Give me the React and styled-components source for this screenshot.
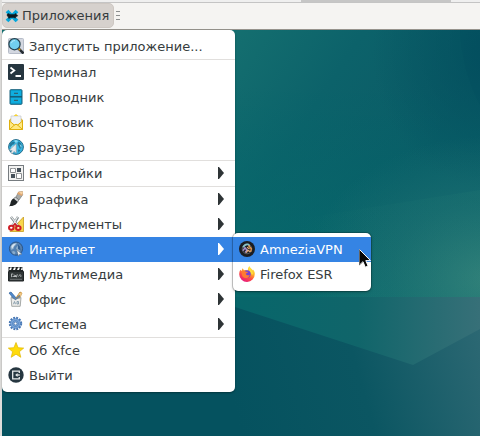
import React from "react";
import styled, { createGlobalStyle, css } from "styled-components";

const GlobalStyle = createGlobalStyle`
  * { box-sizing: border-box; }
  body { margin: 0; }
  body, button { font-family: "DejaVu Sans", sans-serif; font-size: 13px; line-height: 16px; color: #363c3e; }
`;

const Screen = styled.div`
  min-height: 100vh;
  display: flex;
  flex-direction: column;
  background: #f5f4f2;
  border-left: 2px solid #dedddb;
`;

const HostTabs = styled.div`
  display: flex;
  justify-content: flex-end;
  height: 3px;
  padding-right: 29px;
  background: #efefef;
  border-bottom: 1px solid #c4c4c4;
`;

const HostTab = styled.div`
  flex: 0 1 150px;
  background: #c6c6c6;
`;

const Panel = styled.header`
  display: flex;
  align-items: center;
  gap: 2px;
  height: 27px;
  padding-bottom: 1px;
  border-bottom: 1px solid #96938d;
`;

const AppsButton = styled.button`
  display: flex;
  align-items: center;
  gap: 3px;
  min-width: 112px;
  height: 25px;
  padding: 0 2px;
  border: 1px solid #cdc7c2;
  border-radius: 5px;
  background: #d6d1cd;
`;

const Grip = styled.span`
  width: 4px;
  height: 9px;
  background: repeating-linear-gradient(#8b8e8f 0 1px, transparent 1px 4px);
`;

const Desktop = styled.main`
  position: relative;
  flex: 1;
  background: #06545f;
`;

const Wallpaper = styled.svg`
  position: absolute;
  inset: 0;
  width: 100%;
  height: 100%;
`;

const menuSurface = css`
  margin: 0;
  padding: 4px 0;
  list-style: none;
  background: #fff;
  border-radius: 5px;
`;

const Menu = styled.ul`
  ${menuSurface}
  position: relative;
  width: 233px;
  box-shadow: 0 1px 2px rgba(0, 0, 0, 0.35);
`;

const Submenu = styled.ul`
  ${menuSurface}
  position: absolute;
  left: calc(100% - 2px);
  top: -4px;
  width: 138px;
  box-shadow: 0 0 0 1px rgba(0, 0, 0, 0.18), 0 1px 3px rgba(0, 0, 0, 0.3);
`;

const MenuRow = styled.li`
  position: relative;
`;

const MenuButton = styled.button`
  display: flex;
  align-items: center;
  gap: 5px;
  width: 100%;
  height: 25px;
  padding: 0 10px 1px 6px;
  border: 0;
  text-align: left;
  white-space: nowrap;
  background: ${(p) => (p.$active ? "#3584e4" : "transparent")};
  color: ${(p) => (p.$active ? "#fff" : "#363c3e")};
`;

const Label = styled.span`
  flex: 1;
  padding-top: 2px;
`;

const Divider = styled.li`
  height: 1px;
  background: #e1dfdd;
`;

const Glyph = styled.svg`
  display: block;
  flex: none;
  width: ${(p) => p.$size || 16}px;
  height: ${(p) => p.$size || 16}px;
`;

const ArrowGlyph = styled.svg`
  flex: none;
  width: 7px;
  height: 12px;
  fill: ${(p) => (p.$active ? "#fff" : "#2e3436")};
`;

const Pointer = styled.svg`
  position: absolute;
  z-index: 2;
  right: 0;
  top: 12px;
  width: 12px;
  height: 19px;
  overflow: visible;
  pointer-events: none;
`;

const icons = {
  search: (
    <>
      <rect x=".5" y=".5" width="15" height="15" rx="1" fill="#d3d7e0" stroke="#b6bcc8" />
      <path d="m10 10 4.7 4.7" stroke="#252c32" strokeWidth="2.6" strokeLinecap="round" />
      <path d="m10.3 10.3 1.8 1.8" stroke="#e8a313" strokeWidth="1.6" />
      <circle cx="6.5" cy="6.2" r="5.6" fill="#72cfee" stroke="#25414d" strokeWidth="1.2" />
      <path d="M3.3 5.2A3.4 3.4 0 0 1 7 2.5" fill="none" stroke="#b2eafa" />
    </>
  ),
  terminal: (
    <>
      <rect width="16" height="16" rx="1" fill="#263640" />
      <path d="m2.5 3.5 3.8 3-3.8 3" fill="none" stroke="#fff" strokeWidth="1.8" />
      <path d="M7.5 12h5.5" stroke="#fff" strokeWidth="2" />
    </>
  ),
  files: (
    <>
      <rect x="2" y=".7" width="12" height="14.6" rx=".8" fill="#0c9fce" stroke="#17607c" strokeWidth="1" />
      <path d="M3 1.8h10v5H3zM3 8.8h10v5H3z" fill="#0faee0" />
      <path d="M2 7.8h12" stroke="#174f66" strokeWidth="1.2" />
      <path d="M6 4.3h4M6 11.3h4" stroke="#36505c" strokeWidth="1" />
    </>
  ),
  mail: (
    <>
      <path d="M1.5 6 8 .8 14.5 6v9.5h-13z" fill="#eec21b" stroke="#d6ac18" />
      <path d="M3 2h10v7l-5 3-5-3z" fill="#f1f3f5" stroke="#c4c7ca" strokeWidth=".7" />
      <path d="M6.2 2 8 .3 9.8 2z" fill="#ffd923" />
      <path d="m1.5 6.5 4.8 4.2L8 9.5l1.7 1.2 4.8-4.2v9h-13z" fill="#ffe982" />
      <path d="M1.5 6v9.5h13V6M2 15l5-4.5h2L14 15M1.5 7l5 4.2M14.5 7l-5 4.2" fill="none" stroke="#dfb00f" />
    </>
  ),
  browser: (
    <>
      <circle cx="8" cy="8" r="7.4" fill="#35b4e2" stroke="#266b88" />
      <path d="m2 4.5 2.5-2L7 3 6 5 4 6 3 8 1.5 7zm8.5-2 2.5 1.7 1 3.8-2 2-1.5-3L9.5 5zM10 10.5l2.5.5-2 2.5z" fill="#24799c" />
      <path d="M6 1.7 8 1l2.2 1L8 4zM11.5 5l2.3 2-.8 2zM3 8l2-2 1 1-3 3z" fill="#8edcf2" />
      <path d="M8.3 4.5v9.8L6 12.4l-1.7 2.4-1.5-1 1.3-2.3-3-.3z" fill="#e7e9ed" stroke="#7d95a3" strokeWidth=".6" />
    </>
  ),
  settings: (
    <>
      <rect x=".5" y=".5" width="15" height="15" fill="#f2f2f1" stroke="#777c80" />
      <path d="M2.5 3.5h5v4h-5zM8.5 8.5h5v5h-5z" fill="#fff" stroke="#8b8e91" />
      <path d="M9 3h4v4H9zM3 9h4v4H3z" fill="#46515a" />
      <path d="M4 3.5h2M10 8.5h2" stroke="#a5a8aa" />
    </>
  ),
  graphics: (
    <>
      <path d="m8 6 2.5-4.8 3.8-.7.3 3.3L11 9z" fill="#a6a9a8" stroke="#777b7a" strokeWidth=".7" />
      <path d="m9 3 1.5-2.3L15 .5 14.2 5z" fill="#e1a66f" />
      <path d="m11 1.5 1.8-1 2 .3-.5 3z" fill="#f5d1a2" />
      <path d="m7.2 6 3.6 2.8-1.3 2.4-3.8-3z" fill="#d0d3d4" stroke="#5b6063" strokeWidth=".7" />
      <path d="m5.5 7.4 4 3.4c-.8 3-3.8 4.4-8.5 4.4C3.2 13 1.8 9.5 5.5 7.4" fill="#202526" />
    </>
  ),
  tools: (
    <>
      <path d="M15.5 1v14.5H2z" fill="#f8d64b" stroke="#c89c20" strokeWidth=".8" />
      <path d="M12.5 8.5v4h-4z" fill="#fff8cf" />
      <path d="m3 1 7 9M10 1 4.5 10" stroke="#81898c" strokeWidth="2.5" />
      <path d="m3.3 1 6.5 8.5M9.5 1 4.5 9.5" stroke="#edf0f1" strokeWidth="1.1" />
      <ellipse cx="3.3" cy="11.8" rx="2.3" ry="2" fill="none" stroke="#cf1f27" strokeWidth="2" />
      <ellipse cx="10.3" cy="12" rx="2.3" ry="2" fill="none" stroke="#cf1f27" strokeWidth="2" />
      <path d="m5 10 2-2 2 2" fill="none" stroke="#cf1f27" strokeWidth="1.7" />
    </>
  ),
  internet: (
    <>
      <circle cx="8" cy="7.6" r="6.6" fill="#5480b0" stroke="#2a4f7d" strokeWidth=".9" />
      <path d="M2.5 6.5C3 3 6 2 9 2L8 4 6.5 5 5.5 8 3 9zm6-.5L11 4l2 3-1.5 4-2-1-1.5-2zM4 10.5 6 10l1.5 1.5-1 2C5 13 4 12 4 10.5" fill="#8aabc9" />
      <path d="M3.4 5.5A5 5 0 0 1 8 2.5L6 5 4 8z" fill="#d8e4f0" />
      <path d="M10 3.5a5.5 5.5 0 0 1 2.5 6L10 8z" fill="#315f94" />
      <path d="m8.5 8.5 5.5 4.7-2.5.2-1 1.9z" fill="#f4f6f8" stroke="#526c85" strokeWidth=".6" />
    </>
  ),
  media: (
    <>
      <path d="M.5 5.5h15V15H.5z" fill="#303637" stroke="#202526" />
      <path d="M.5 1h14l.7 4H.5z" fill="#202526" />
      <path d="m2 1.5 2 0-1 2.5H1.2zm4 0h2L7 4H5zm4 0h2L11 4H9zm3.7 0h1V4H13z" fill="#fff" />
      <path d="M3.5 7.8v3.4M3.5 8h1.7M6 8.5l.8 2.5.9-1.8.8 2 .8-3M10.5 10.5l1.5-2 .8.8v1.7M4.5 10.5h3.5" fill="none" stroke="#c5c9ca" strokeWidth=".8" />
      <path d="M2 13.3h12" stroke="#6e7475" />
    </>
  ),
  office: (
    <>
      <path d="m1 2 2-1 6 7-2 1z" fill="#4d8ad0" stroke="#2c5d98" strokeWidth=".7" />
      <path d="m8 7 4-6 2 1-3.5 7z" fill="#e8ad4e" stroke="#9e722b" strokeWidth=".7" />
      <path d="m10 3 4-2-1 5z" fill="#f3c782" />
      <path d="M3 6.5c2 1.5 8 1.5 10 0l-.8 8.8H3.8z" fill="#ececea" stroke="#919593" strokeWidth=".8" />
      <path d="m3.5 5.5 4 3 4.5-4" fill="none" stroke="#5d7fa5" strokeWidth="1.3" />
      <path d="m5.5 13.2 1-2.7 1 2.7M9 10.5h1.5v2.5H9z" fill="none" stroke="#829aa9" strokeWidth=".9" />
    </>
  ),
  system: (
    <>
      <circle cx="7.5" cy="7.5" r="5.6" fill="none" stroke="#4777b4" strokeWidth="2.2" strokeDasharray="1.9 1.03" />
      <circle cx="7.5" cy="7.5" r="4.8" fill="#83afe0" stroke="#5686c4" />
      <circle cx="7.5" cy="7.5" r="3" fill="none" stroke="#4f7fbd" strokeWidth=".9" />
      <circle cx="7.5" cy="7.5" r="1.5" fill="#fff" stroke="#456fa6" strokeWidth=".8" />
    </>
  ),
  star: <path d="m8 .5 2.1 5.2 5.6.4-4.3 3.6 1.4 5.6L8 12.2l-4.8 3.1 1.4-5.6L.3 6.1l5.6-.4z" fill="#ffdb0b" stroke="#e0b600" strokeWidth=".7" />,
  exit: (
    <>
      <circle cx="8" cy="8" r="7.7" fill="#263640" />
      <path d="M11.3 6V4.2H4.7v7.6h6.6V10" fill="none" stroke="#e9ebec" strokeWidth="1.3" />
      <path d="M11.8 8H9" stroke="#e9ebec" strokeWidth="1.3" />
      <path d="M9.5 6 7.2 8l2.3 2z" fill="#e9ebec" />
    </>
  ),
  amnezia: (
    <>
      <circle cx="8" cy="8" r="8" fill="#1c1d21" />
      <circle cx="8" cy="8" r="4.8" fill="none" stroke="#696d72" strokeWidth=".8" />
      <path d="M4.2 6.4C5.2 3.8 7.3 3.1 9 3.4l1.8 1.4" fill="none" stroke="#86c3cd" strokeWidth="1.7" />
      <path d="m9.5 4.5 2.8 3.3-.7 3" fill="none" stroke="#e6994f" strokeWidth="1.4" />
      <path d="M4 9.6 6 6.8l2 2.4-1.8 2.3" fill="none" stroke="#a491cf" strokeWidth="1.6" />
      <path d="m7.4 11.8 1.4-2.6 2.4 1.6M8 6.3l2.6 1.8" fill="none" stroke="#e8ae7a" strokeWidth="1.2" />
    </>
  ),
  firefox: (
    <>
      <defs>
        <linearGradient id="fox" x1=".8" y1="0" x2=".25" y2="1">
          <stop stopColor="#fff44f" />
          <stop offset=".35" stopColor="#ffb526" />
          <stop offset=".65" stopColor="#ff4b42" />
          <stop offset="1" stopColor="#e31587" />
        </linearGradient>
      </defs>
      <path d="M1.3 3.8 2.5 5 3.5 2.2 5 4.3C6.5 3.7 8 4 9 4.5 8.6 2.8 9.3 1 10.5 0c.4 2 2.3 2.7 3.3 4.2l.5-.4c1 1.2 1.5 2.6 1.5 4.2a7.8 7.8 0 0 1-15.6.2c0-1.7.4-3.1 1.1-4.4" fill="url(#fox)" />
      <circle cx="8" cy="8" r="3.7" fill="#7640d2" />
      <path d="M2.5 5.5 5 4.7l2 1.1 2 .2c-.2 1-1.5 1-2.2 1.7.7 2 2.6 2 4 1-.7 2.7-3.2 4.2-5.7 3C3 10.8 2.5 8 2.5 5.5" fill="#ff7a32" />
      <path d="M10 2c.4 2 3.6 3.5 3.3 6.4" fill="none" stroke="#ffde3e" strokeWidth="1.7" />
    </>
  ),
  xfce: (
    <>
      <path d="m2.3 2.3 11.4 11.4M13.7 2.3 2.3 13.7" stroke="#05a7dc" strokeWidth="4.4" />
      <path d="M2.5 6 4 5.2l1.8 1h4.7L12.3 5l.6 1.3 1.6 1-.5 1-1.5.4-.7 1.8-1.7-.8H6.5l-2.2 1.2-.5-2.1-1.3-.9z" fill="#10191d" stroke="#10191d" strokeWidth=".6" />
    </>
  ),
};

function Icon({ name, size }) {
  return <Glyph viewBox="0 0 16 16" $size={size} aria-hidden="true">{icons[name]}</Glyph>;
}

const groups = [
  [{ icon: "search", label: "Запустить приложение..." }],
  [
    { icon: "terminal", label: "Терминал" },
    { icon: "files", label: "Проводник" },
    { icon: "mail", label: "Почтовик" },
    { icon: "browser", label: "Браузер" },
  ],
  [{ icon: "settings", label: "Настройки", nested: true }],
  [
    { icon: "graphics", label: "Графика", nested: true },
    { icon: "tools", label: "Инструменты", nested: true },
    {
      icon: "internet",
      label: "Интернет",
      nested: true,
      active: true,
      children: [
        { icon: "amnezia", label: "AmneziaVPN", active: true, pointer: true },
        { icon: "firefox", label: "Firefox ESR" },
      ],
    },
    { icon: "media", label: "Мультимедиа", nested: true },
    { icon: "office", label: "Офис", nested: true },
    { icon: "system", label: "Система", nested: true },
  ],
  [
    { icon: "star", label: "Об Xfce" },
    { icon: "exit", label: "Выйти" },
  ],
];

function MenuItem({ item }) {
  return (
    <MenuRow role="none">
      <MenuButton
        type="button"
        role="menuitem"
        $active={item.active}
        aria-haspopup={item.nested ? "menu" : undefined}
        aria-expanded={item.nested ? Boolean(item.children) : undefined}
      >
        <Icon name={item.icon} />
        <Label>{item.label}</Label>
        {item.nested && (
          <ArrowGlyph viewBox="0 0 7 12" $active={item.active} aria-hidden="true">
            <path d="M0 0h1l5 6-5 6H0z" />
          </ArrowGlyph>
        )}
      </MenuButton>
      {item.children && (
        <Submenu role="menu" aria-label={item.label}>
          {item.children.map((child) => <MenuItem key={child.label} item={child} />)}
        </Submenu>
      )}
      {item.pointer && (
        <Pointer viewBox="0 0 12 19" aria-hidden="true">
          <path d="M.5.5v15.3l3.4-3.2 2.4 5.6 2.8-1.2-2.3-5.4h4.7z" fill="#080808" stroke="#fff" />
          <path d="M.5.5v15.3l3.4-3.2" fill="none" stroke="#222" strokeWidth=".7" />
        </Pointer>
      )}
    </MenuRow>
  );
}

function Background() {
  return (
    <Wallpaper viewBox="0 0 478 406" preserveAspectRatio="none" aria-hidden="true">
      <defs>
        <linearGradient id="sky" gradientUnits="userSpaceOnUse" x1="220" y1="0" x2="420" y2="130">
          <stop stopColor="#157070" />
          <stop offset=".5" stopColor="#0c626a" />
          <stop offset="1" stopColor="#0b5b66" />
        </linearGradient>
        <linearGradient id="lower" x1="0" y1="0" x2="0" y2="1">
          <stop offset=".2" stopColor="#00666a" stopOpacity="0" />
          <stop offset="1" stopColor="#086b6c" stopOpacity=".9" />
        </linearGradient>
        <radialGradient id="corner">
          <stop stopColor="#014d5d" stopOpacity=".8" />
          <stop offset="1" stopColor="#014d5d" stopOpacity="0" />
        </radialGradient>
        <linearGradient id="ray" gradientUnits="userSpaceOnUse" x1="290" y1="0" x2="478" y2="0">
          <stop stopColor="#268075" stopOpacity="0" />
          <stop offset="1" stopColor="#268075" stopOpacity=".16" />
        </linearGradient>
        <linearGradient id="ground" gradientUnits="userSpaceOnUse" x1="230" y1="370" x2="478" y2="300">
          <stop stopColor="#05525f" />
          <stop offset=".5" stopColor="#0b5662" />
          <stop offset="1" stopColor="#2c6873" />
        </linearGradient>
        <linearGradient id="facet" gradientUnits="userSpaceOnUse" x1="235" y1="0" x2="478" y2="0">
          <stop stopColor="#07666a" />
          <stop offset=".5" stopColor="#10656a" />
          <stop offset="1" stopColor="#377078" />
        </linearGradient>
        <radialGradient id="glow">
          <stop stopColor="#438b80" stopOpacity=".75" />
          <stop offset=".55" stopColor="#2f7778" stopOpacity=".35" />
          <stop offset="1" stopColor="#2f7778" stopOpacity="0" />
        </radialGradient>
      </defs>
      <path d="M0 0h478v267H0z" fill="url(#sky)" />
      <path d="M0 0h478v267H0z" fill="url(#lower)" />
      <ellipse cx="490" cy="20" rx="120" ry="140" fill="url(#corner)" />
      <path d="M458 0h20v75q-18-35-20-75" fill="#014d5d" opacity=".2" />
      <ellipse cx="490" cy="250" rx="190" ry="145" fill="url(#glow)" />
      <path d="M290 190 478 160v107H290z" fill="url(#ray)" />
      <path d="M0 267h478v139H0z" fill="url(#ground)" />
      <path d="M0 267h478v32l-67 36L233 277 0 201z" fill="url(#facet)" />
    </Wallpaper>
  );
}

export default function App() {
  return (
    <>
      <GlobalStyle />
      <Screen>
        <HostTabs><HostTab /></HostTabs>
        <Panel>
          <AppsButton type="button" aria-haspopup="menu" aria-expanded="true">
            <Icon name="xfce" size={14} />
            Приложения
          </AppsButton>
          <Grip />
        </Panel>
        <Desktop>
          <Background />
          <Menu role="menu" aria-label="Приложения">
            {groups.map((group, index) => (
              <React.Fragment key={group[0].label}>
                {index > 0 && <Divider role="separator" />}
                {group.map((item) => <MenuItem key={item.label} item={item} />)}
              </React.Fragment>
            ))}
          </Menu>
        </Desktop>
      </Screen>
    </>
  );
}
